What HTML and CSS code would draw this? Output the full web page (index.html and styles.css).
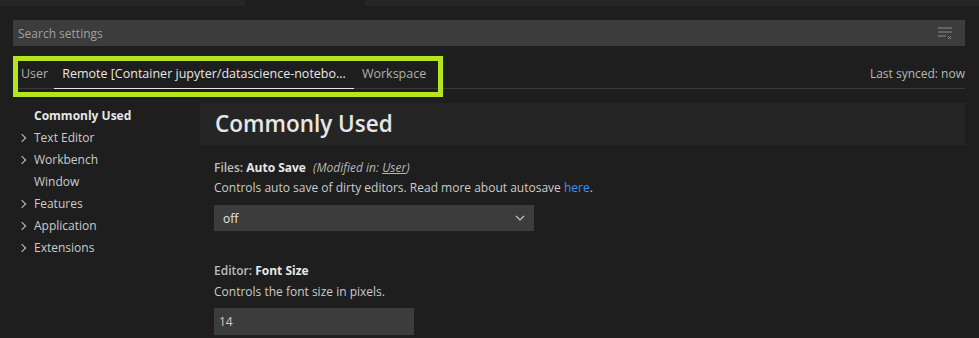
FILE: index.html
```html
<!DOCTYPE html>
<html lang="en">
<head>
    <meta charset="UTF-8">
    <title>Settings</title>
    <link rel="stylesheet" href="styles.css">
</head>
<body>
    <div class="topbar">
        <div class="topbar-tab"></div>
        <div class="topbar-gap"></div>
        <div class="topbar-rest"></div>
    </div>

    <div class="search">
        <span class="search-placeholder">Search settings</span>
        <svg class="search-clear" width="16" height="16" viewBox="0 0 16 16">
            <path d="M1 3h14M1 7h14M1 11h8" stroke="#8a8a8a" stroke-width="1"/>
            <path d="M11 11l3 3M14 11l-3 3" stroke="#8a8a8a" stroke-width="1"/>
        </svg>
    </div>

    <div class="tabs-row">
        <div class="tabs">
            <span class="tab">User</span>
            <span class="tab active">Remote [Container jupyter/datascience-notebo...</span>
            <span class="tab">Workspace</span>
        </div>
        <span class="synced">Last synced: now</span>
        <!-- highlight annotation -->
        <div class="highlight"></div>
    </div>

    <div class="main">
        <div class="nav">
            <div class="nav-item bold">Commonly Used</div>
            <div class="nav-item has-children">Text Editor</div>
            <div class="nav-item has-children">Workbench</div>
            <div class="nav-item">Window</div>
            <div class="nav-item has-children">Features</div>
            <div class="nav-item has-children">Application</div>
            <div class="nav-item has-children">Extensions</div>
        </div>

        <div class="content">
            <div class="section-header">Commonly Used</div>

            <div class="setting">
                <div class="setting-title">
                    <span class="cat">Files:</span> <b>Auto Save</b>
                    <span class="modified">(Modified in: <u>User</u>)</span>
                </div>
                <div class="setting-desc">Controls auto save of dirty editors. Read more about autosave <a href="#">here</a>.</div>
                <div class="select">
                    <span>off</span>
                    <svg width="16" height="16" viewBox="0 0 16 16">
                        <path d="M4 6l4 4 4-4" fill="none" stroke="#c5c5c5" stroke-width="1.2"/>
                    </svg>
                </div>
            </div>

            <div class="setting">
                <div class="setting-title">
                    <span class="cat">Editor:</span> <b>Font Size</b>
                </div>
                <div class="setting-desc spaced">Controls the font size in pixels.</div>
                <div class="input">14</div>
            </div>
        </div>
    </div>
</body>
</html>
```

FILE: styles.css
```css
* {
    margin: 0;
    padding: 0;
    box-sizing: border-box;
}

body {
    font-family: "Open Sans", "Noto Sans", sans-serif;
    font-size: 12px;
    background: #1e1e1e;
    color: #cccccc;
    overflow: hidden;
}

/* Top strip */
.topbar {
    display: flex;
    height: 6px;
}

.topbar-tab { width: 245px; background: #252526; }
.topbar-gap { width: 120px; }
.topbar-rest { flex: 1; background: #252526; }

/* Search */
.search {
    margin: 14px 14px 0 13px;
    height: 26px;
    background: #3c3c3c;
    display: flex;
    align-items: center;
    padding: 0 12px 0 5px;
}

.search-placeholder {
    flex: 1;
    color: #a0a0a0;
}

.search-clear { display: block; }

/* Tabs */
.tabs-row {
    position: relative;
    margin: 10px 14px 0 13px;
    height: 33px;
    display: flex;
    align-items: stretch;
    border-bottom: 1px solid #3a3a3a;
}

.tabs {
    flex: 1;
    display: flex;
    font-size: 12.5px;
}

.tab {
    display: flex;
    align-items: center;
    padding: 2px 8px 0;
    color: #b0b0b0;
    margin-bottom: -1px;
}

.tab:first-child { padding: 2px 6px 0 8px; }

.tab.active {
    color: #e7e7e7;
    border-bottom: 1px solid #e7e7e7;
}

.synced {
    display: flex;
    align-items: center;
    padding-top: 2px;
    color: #b8b8b8;
}

.highlight {
    position: absolute;
    left: 0;
    top: 0;
    width: 430px;
    height: 41px;
    border: 5px solid #b5e61d;
    pointer-events: none;
}

/* Main */
.main {
    display: flex;
    margin-top: 14px;
}

.nav {
    width: 200px;
    padding-left: 34px;
}

.nav-item {
    position: relative;
    height: 22px;
    line-height: 26px;
    color: #cccccc;
}

.nav-item.bold {
    font-weight: 700;
    color: #e7e7e7;
}

.nav-item.has-children::before {
    content: '';
    position: absolute;
    left: -15px;
    top: 10px;
    width: 5px;
    height: 5px;
    border-top: 1px solid #c5c5c5;
    border-right: 1px solid #c5c5c5;
    transform: rotate(45deg);
}

.content {
    flex: 1;
    margin-right: 14px;
}

.section-header {
    height: 42px;
    background: #252526;
    padding-left: 15px;
    font-size: 22.5px;
    font-weight: 600;
    line-height: 42px;
    color: #e7e7e7;
}

.setting {
    padding: 13px 14px 0;
}

.setting-title {
    line-height: 20px;
    color: #bdbdbd;
}

.setting-title .cat { font-weight: 600; }

.setting-title b {
    font-weight: 700;
    color: #e7e7e7;
}

.modified {
    font-style: italic;
    margin-left: 4px;
    color: #b8b8b8;
}

.setting-desc {
    line-height: 20px;
    color: #cccccc;
}

.setting-desc.spaced { margin-top: 1px; }

.setting-desc a {
    color: #3794ff;
    text-decoration: none;
}

.select {
    margin-top: 7px;
    width: 320px;
    height: 26px;
    background: #3c3c3c;
    display: flex;
    align-items: center;
    justify-content: space-between;
    padding: 0 6px 0 9px;
    color: #e7e7e7;
    margin-bottom: 17px;
}

.select svg { display: block; }

.input {
    margin-top: 6px;
    width: 200px;
    height: 27px;
    background: #3c3c3c;
    line-height: 27px;
    padding-left: 5px;
    color: #cccccc;
}
```
